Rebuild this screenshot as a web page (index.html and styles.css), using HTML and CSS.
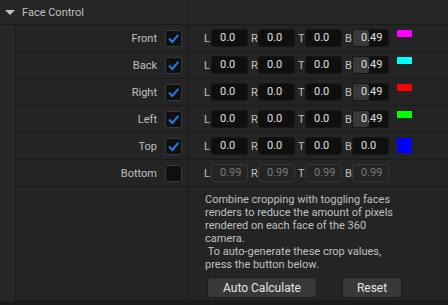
FILE: index.html
```html
<!DOCTYPE html>
<html lang="en">
<head>
  <meta charset="UTF-8" />
  <title>Face Control</title>
  <link rel="stylesheet" href="styles.css">
</head>
<body>
  <div class="details">
    <div class="category">
      <div class="category-name"><span class="arrow"></span>Face Control</div>
      <div class="category-value"></div>
    </div>

    <div class="section">
      <div class="gutter"></div>
      <div class="rows">
        <div class="row">
          <div class="name"><span>Front</span><span class="check"><svg viewBox="0 0 15 15"><path d="M3 7.5 L6.3 11 L12.3 3.8"/></svg></span></div>
          <div class="value">
            <span class="axis">L</span><span class="field">0.0</span>
            <span class="axis">R</span><span class="field">0.0</span>
            <span class="axis">T</span><span class="field">0.0</span>
            <span class="axis">B</span><span class="field"><span class="fill"></span><span class="num">0.49</span></span>
            <span class="swatch magenta"></span>
          </div>
        </div>

        <div class="row">
          <div class="name"><span>Back</span><span class="check"><svg viewBox="0 0 15 15"><path d="M3 7.5 L6.3 11 L12.3 3.8"/></svg></span></div>
          <div class="value">
            <span class="axis">L</span><span class="field">0.0</span>
            <span class="axis">R</span><span class="field">0.0</span>
            <span class="axis">T</span><span class="field">0.0</span>
            <span class="axis">B</span><span class="field"><span class="fill"></span><span class="num">0.49</span></span>
            <span class="swatch cyan"></span>
          </div>
        </div>

        <div class="row">
          <div class="name"><span>Right</span><span class="check"><svg viewBox="0 0 15 15"><path d="M3 7.5 L6.3 11 L12.3 3.8"/></svg></span></div>
          <div class="value">
            <span class="axis">L</span><span class="field">0.0</span>
            <span class="axis">R</span><span class="field">0.0</span>
            <span class="axis">T</span><span class="field">0.0</span>
            <span class="axis">B</span><span class="field"><span class="fill"></span><span class="num">0.49</span></span>
            <span class="swatch red"></span>
          </div>
        </div>

        <div class="row">
          <div class="name"><span>Left</span><span class="check"><svg viewBox="0 0 15 15"><path d="M3 7.5 L6.3 11 L12.3 3.8"/></svg></span></div>
          <div class="value">
            <span class="axis">L</span><span class="field">0.0</span>
            <span class="axis">R</span><span class="field">0.0</span>
            <span class="axis">T</span><span class="field">0.0</span>
            <span class="axis">B</span><span class="field"><span class="fill"></span><span class="num">0.49</span></span>
            <span class="swatch green"></span>
          </div>
        </div>

        <div class="row">
          <div class="name"><span>Top</span><span class="check"><svg viewBox="0 0 15 15"><path d="M3 7.5 L6.3 11 L12.3 3.8"/></svg></span></div>
          <div class="value">
            <span class="axis">L</span><span class="field">0.0</span>
            <span class="axis">R</span><span class="field">0.0</span>
            <span class="axis">T</span><span class="field">0.0</span>
            <span class="axis">B</span><span class="field">0.0</span>
            <span class="swatch blue"></span>
          </div>
        </div>

        <div class="row">
          <div class="name"><span>Bottom</span><span class="check off"></span></div>
          <div class="value">
            <span class="axis">L</span><span class="field disabled">0.99</span>
            <span class="axis">R</span><span class="field disabled">0.99</span>
            <span class="axis">T</span><span class="field disabled">0.99</span>
            <span class="axis">B</span><span class="field disabled">0.99</span>
          </div>
        </div>

        <div class="row note-row">
          <div class="name"></div>
          <div class="note">
            <p>Combine cropping with toggling faces<br>renders to reduce the amount of pixels<br>rendered on each face of the 360<br>camera.<br>&nbsp;To auto-generate these crop values,<br>press the button below.</p>
            <div class="buttons">
              <button class="btn btn-auto">Auto Calculate</button>
              <button class="btn btn-reset">Reset</button>
            </div>
          </div>
        </div>
      </div>
    </div>
  </div>
</body>
</html>
```

FILE: styles.css
```css
body {
  margin: 0;
  background: #1a1a1a;
  font-family: Roboto, "Liberation Sans", sans-serif;
  font-size: 11px;
  color: #c0c0c0;
}

.details {
  background: #242424;
}

.category {
  display: flex;
  height: 24px;
  border-bottom: 1px solid #1a1a1a;
  background: #262626;
}

.category-name {
  display: flex;
  align-items: center;
  width: 187px;
  border-right: 1px solid #1a1a1a;
}

.arrow {
  width: 0;
  height: 0;
  margin: 1px 7px 0 5px;
  border-left: 5px solid transparent;
  border-right: 5px solid transparent;
  border-top: 5px solid #c0c0c0;
}

.category-value {
  flex: 1;
}

.section {
  display: flex;
}

.gutter {
  width: 15px;
  border-right: 1px solid #1a1a1a;
  background: #262626;
}

.rows {
  flex: 1;
}

.row {
  display: flex;
  height: 26px;
  border-bottom: 1px solid #1a1a1a;
}

.name {
  display: flex;
  justify-content: flex-end;
  align-items: center;
  gap: 8px;
  width: 166px;
  padding-right: 5px;
  border-right: 1px solid #1a1a1a;
}

.check {
  display: flex;
  align-items: center;
  justify-content: center;
  width: 17px;
  height: 17px;
  box-sizing: border-box;
  border: 1px solid #383838;
  border-radius: 2px;
  background: #0f0f0f;
}

.check svg {
  width: 15px;
  height: 15px;
  fill: none;
  stroke: #1f7ee6;
  stroke-width: 2;
}

.value {
  display: flex;
  align-items: center;
  padding-left: 16px;
}

.axis {
  width: 7px;
}

.axis + .field + .axis {
  margin-left: 3px;
}

.field {
  position: relative;
  width: 37px;
  height: 18px;
  box-sizing: border-box;
  padding-left: 8px;
  border: 1px solid #161616;
  border-radius: 3px;
  background: #0f0f0f;
  color: #e0e0e0;
  line-height: 16px;
}

.field .fill {
  position: absolute;
  left: 0;
  top: 0;
  bottom: 0;
  width: 16px;
  border-radius: 2px;
  background: #383838;
}

.field .num {
  position: relative;
}

.field.disabled {
  border-color: #363636;
  background: #242424;
  color: #7a7a7a;
}

.swatch {
  align-self: flex-start;
  width: 15px;
  height: 7px;
  margin: 5px 0 0 8px;
}

.magenta { background: #ff00ff; }
.cyan { background: #00ffff; }
.red { background: #ff0000; }
.green { background: #00ff00; }
.blue { background: #0000ff; height: 15px; }

.note-row {
  height: 113px;
}

.note {
  padding: 6px 0 0 17px;
}

.note p {
  margin: 0;
  line-height: 13px;
}

.buttons {
  display: flex;
  margin-top: 6px;
}

.btn {
  height: 21px;
  box-sizing: border-box;
  border: 1px solid #1c1c1c;
  border-radius: 4px;
  background: #383838;
  color: #e6e6e6;
  font-family: Roboto, "Liberation Sans", sans-serif;
  font-size: 12px;
  padding: 0;
}

.btn-auto {
  width: 110px;
  margin-left: 2px;
}

.btn-reset {
  width: 60px;
  margin-left: 25px;
}
```
